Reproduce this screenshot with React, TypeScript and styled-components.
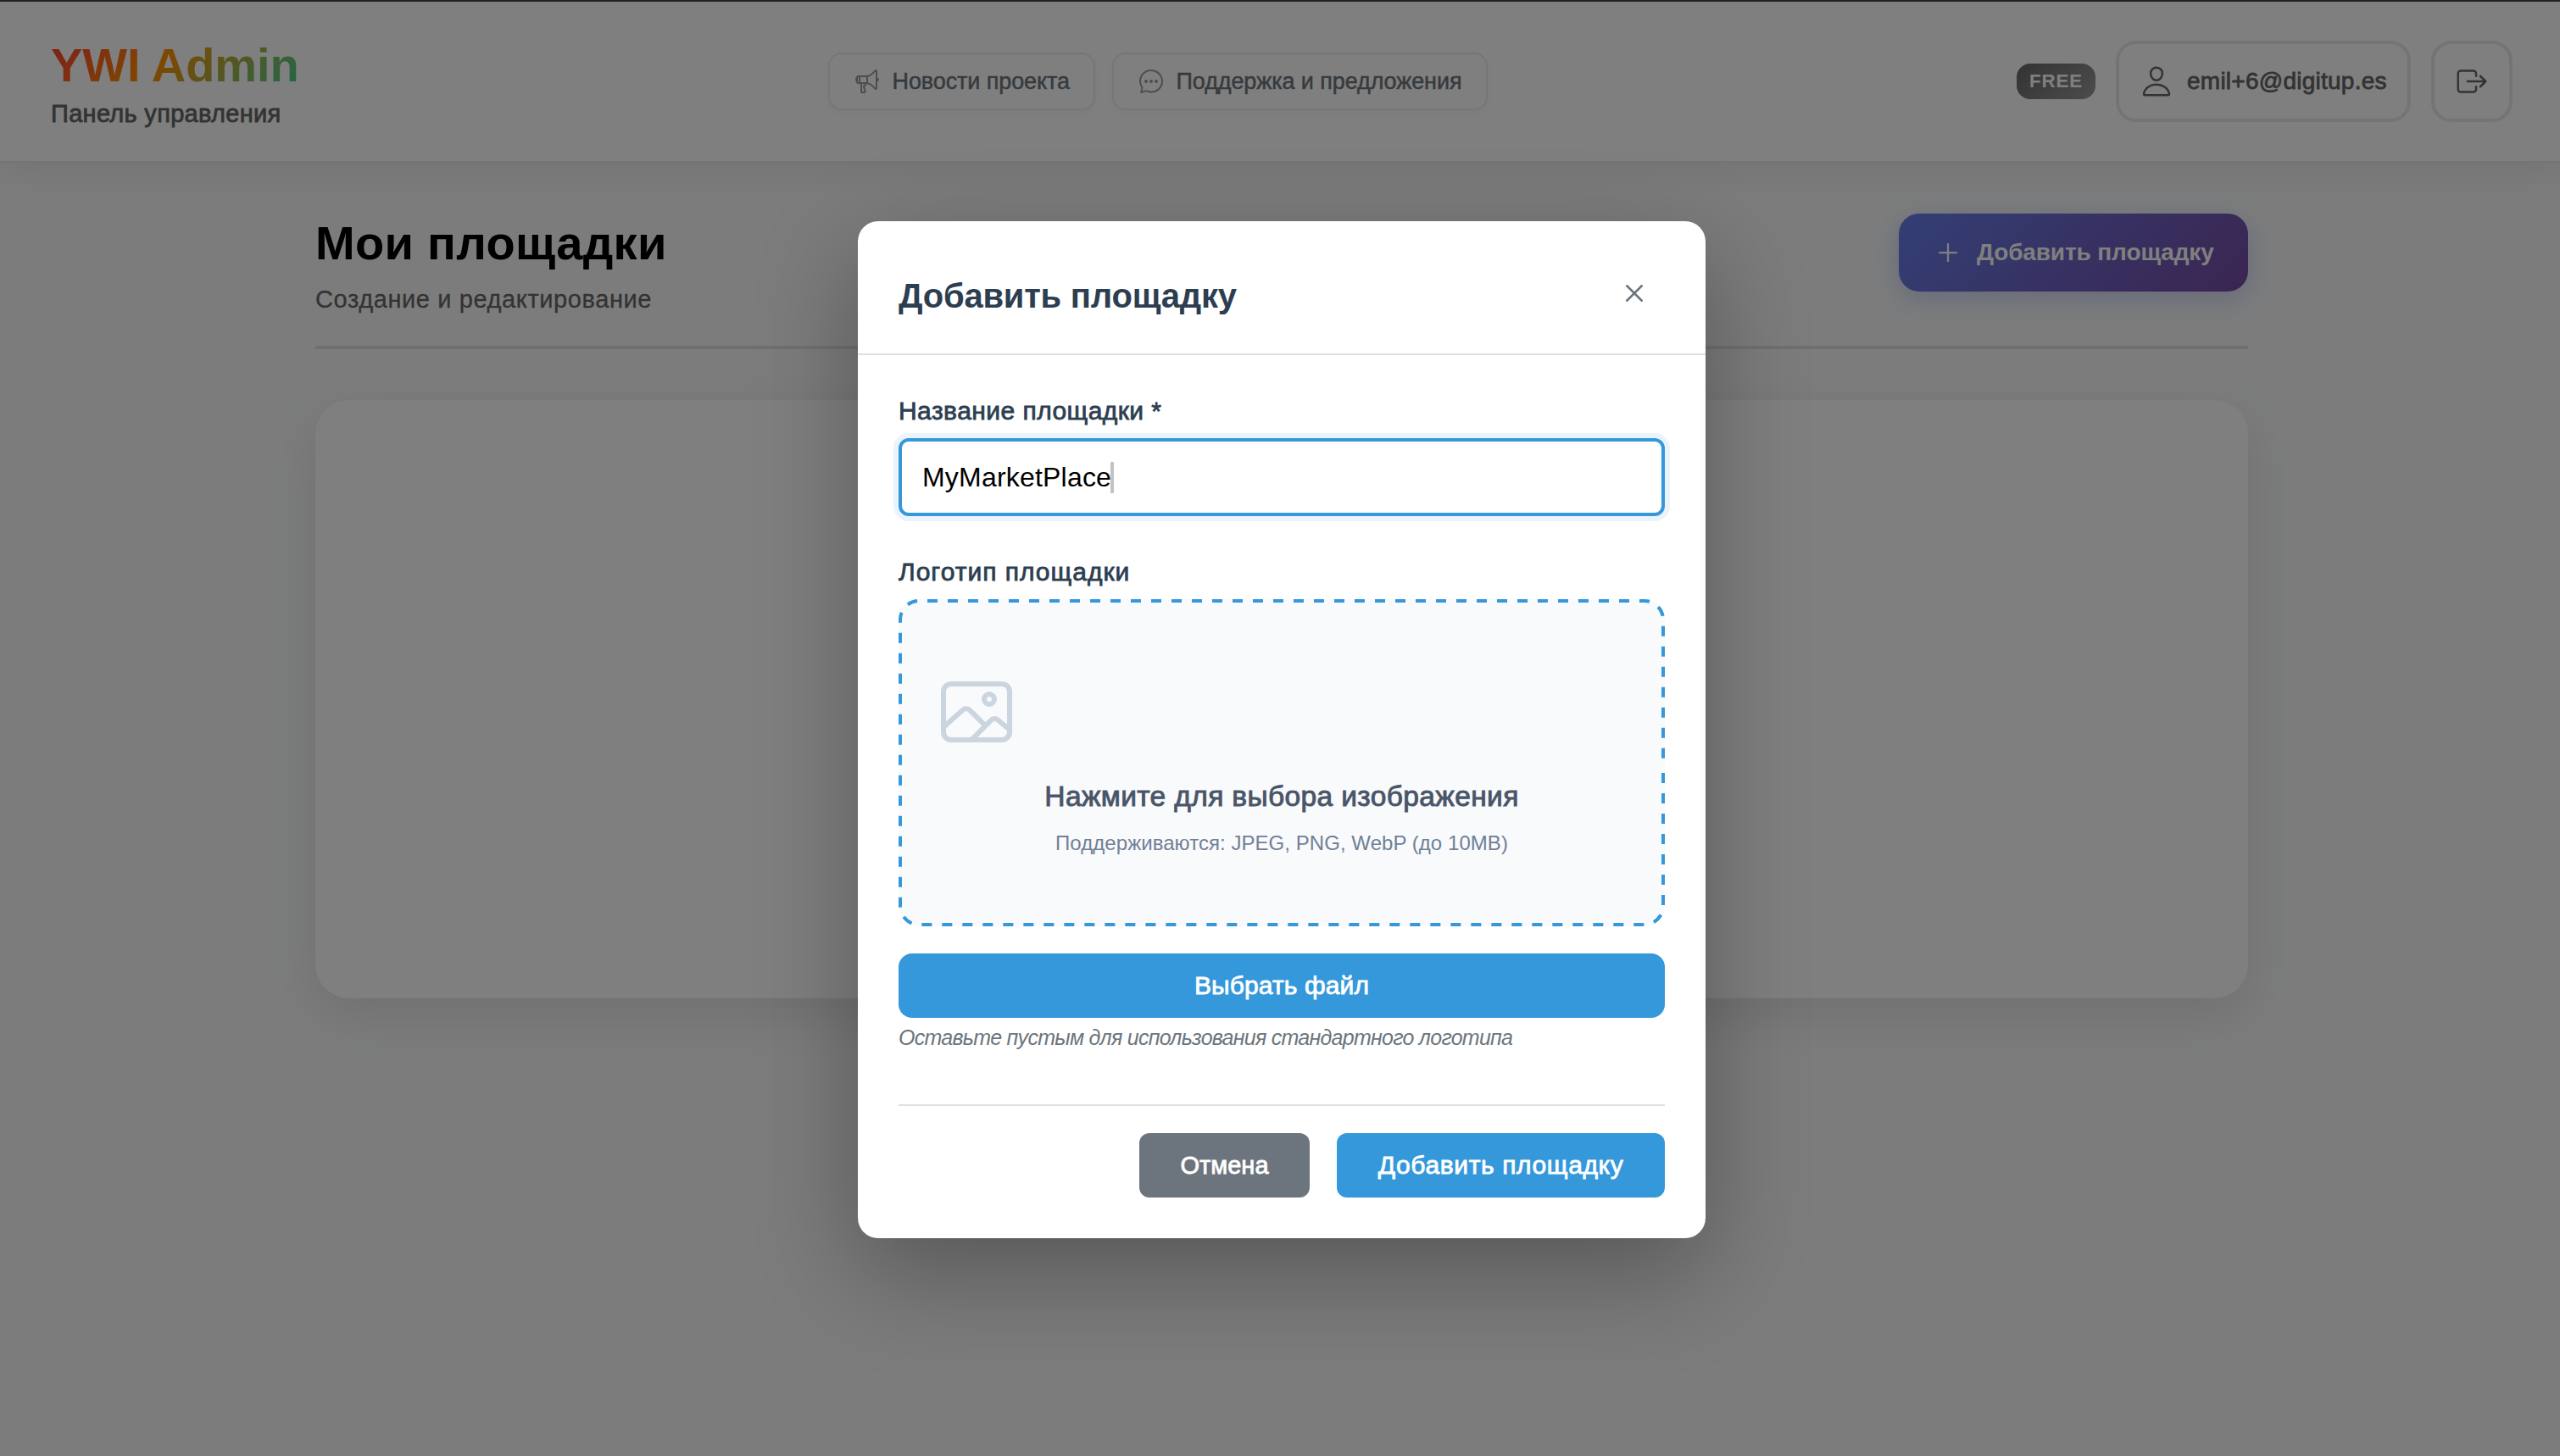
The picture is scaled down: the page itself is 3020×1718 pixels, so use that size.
import React from "react";
import styled, { createGlobalStyle } from "styled-components";
import {
  IoAddOutline,
  IoChatbubbleEllipsesOutline,
  IoCloseOutline,
  IoExitOutline,
  IoImageOutline,
  IoMegaphoneOutline,
  IoPersonOutline,
} from "react-icons/io5";

const GlobalStyle = createGlobalStyle`
  * {
    box-sizing: border-box;
  }

  body {
    margin: 0;
    overflow: hidden;
    background: #f8f9fa;
    font-family: "Liberation Sans", Arial, sans-serif;
  }

  h1, h2, p {
    margin: 0;
  }

  button {
    font-family: inherit;
    border: none;
    cursor: pointer;
  }

  svg {
    display: block;
    flex-shrink: 0;
  }
`;

// Layout
const Page = styled.div`
  position: relative;
  width: 3024px;
  height: 1718px;
  border-top: 2px solid #222222;
  background: #f8f9fa;
`;

const Header = styled.header`
  position: relative;
  display: flex;
  align-items: center;
  justify-content: space-between;
  height: 190px;
  padding: 0 60px;
  background: #ffffff;
  border-bottom: 2px solid #e8e8e8;
  box-shadow: 0 8px 40px rgba(0, 0, 0, 0.08);
`;

const Brand = styled.div`
  display: flex;
  flex-direction: column;
  gap: 14px;
  width: 292px;
`;

const BrandName = styled.div`
  font-size: 56px;
  font-weight: 700;
  line-height: 62px;
  letter-spacing: -0.1px;
  white-space: nowrap;
  background: linear-gradient(135deg, #ff3c38 0%, #ff9000 44%, #3ad29a 100%);
  background-clip: text;
  -webkit-background-clip: text;
  color: transparent;
`;

const BrandSubtitle = styled.div`
  font-size: 29px;
  line-height: 25px;
  letter-spacing: 0.3px;
  white-space: nowrap;
  color: #666666;
  -webkit-text-stroke: 0.8px #666666;
`;

const Nav = styled.nav`
  display: flex;
  gap: 20px;
`;

const NavLink = styled.a<{ $width: number }>`
  display: flex;
  align-items: center;
  gap: 14px;
  width: ${({ $width }) => $width}px;
  height: 68px;
  padding: 0 28px;
  border: 2px solid #ececec;
  border-radius: 16px;
  box-shadow: 0 4px 8px rgba(0, 0, 0, 0.04);
  background: #ffffff;
  color: #6c757d;
  font-size: 27px;
  letter-spacing: -0.1px;
  white-space: nowrap;
  -webkit-text-stroke: 0.5px #6c757d;

  svg {
    opacity: 0.7;
    -webkit-text-stroke: 0;
  }
`;

const Account = styled.div`
  display: flex;
  align-items: center;
  gap: 24px;
`;

const PlanBadge = styled.span`
  display: flex;
  align-items: center;
  justify-content: center;
  width: 93px;
  height: 42px;
  border-radius: 16px;
  background: linear-gradient(135deg, #666666, #999999);
  color: #ffffff;
  font-size: 22.4px;
  font-weight: 700;
  letter-spacing: 0.8px;
`;

const AccountBox = styled.div<{ $width: number }>`
  display: flex;
  align-items: center;
  gap: 16px;
  width: ${({ $width }) => $width}px;
  height: 96px;
  padding: 0 24px;
  border: 4px solid #e8e8e8;
  border-radius: 24px;
  background: #ffffff;
  color: #666666;
  font-size: 28px;
  letter-spacing: 0.25px;
  white-space: nowrap;
  -webkit-text-stroke: 0.8px #666666;
`;

const Main = styled.main`
  width: 2280px;
  margin: 0 auto;
  padding-top: 60px;
`;

const PageHeader = styled.div`
  display: flex;
  align-items: flex-start;
  justify-content: space-between;
  height: 160px;
  margin-bottom: 60px;
  border-bottom: 4px solid #e0e0e0;
`;

const PageTitle = styled.h1`
  font-size: 56px;
  font-weight: 700;
  line-height: 69px;
  letter-spacing: 0.32px;
  color: #000000;
`;

const PageSubtitle = styled.p`
  margin-top: 14px;
  font-size: 29px;
  line-height: 36px;
  letter-spacing: 0.6px;
  color: #666666;
  -webkit-text-stroke: 0.3px #666666;
`;

const AddButton = styled.button`
  display: flex;
  align-items: center;
  gap: 16px;
  width: 412px;
  height: 92px;
  padding: 0 40px;
  border-radius: 24px;
  background: linear-gradient(135deg, #667eea 0%, #764ba2 100%);
  box-shadow: 0 8px 30px rgba(102, 126, 234, 0.3);
  color: #ffffff;
  font-size: 28px;
  font-weight: 700;
  line-height: 34px;
  letter-spacing: -0.12px;
  white-space: nowrap;
`;

const Card = styled.section`
  height: 706px;
  border-radius: 40px;
  background: #ffffff;
  box-shadow: 0 20px 60px rgba(0, 0, 0, 0.1);
`;

// Modal
const Overlay = styled.div`
  position: absolute;
  inset: 0;
  display: flex;
  align-items: center;
  justify-content: center;
  background: rgba(0, 0, 0, 0.5);
`;

const Modal = styled.div`
  width: 1000px;
  height: 1200px;
  margin-top: 2px;
  border-radius: 24px;
  background: #ffffff;
  box-shadow: 0 40px 120px rgba(0, 0, 0, 0.3);
`;

const ModalHeader = styled.div`
  display: flex;
  align-items: flex-start;
  justify-content: space-between;
  height: 158px;
  padding: 48px 48px 0;
  border-bottom: 2px solid #e0e0e0;
`;

const ModalTitle = styled.h2`
  font-size: 40px;
  font-weight: 700;
  line-height: 81px;
  letter-spacing: -0.22px;
  color: #2c3e50;
`;

const CloseButton = styled.button`
  margin-top: 1px;
  padding: 16px;
  background: none;
  color: #6c757d;
`;

const Form = styled.form`
  padding: 48px;
`;

const Label = styled.label<{ $spacing: number }>`
  display: block;
  margin-bottom: 14px;
  font-size: 30px;
  line-height: 36px;
  letter-spacing: ${({ $spacing }) => $spacing}px;
  color: #2c3e50;
  -webkit-text-stroke: 0.8px #2c3e50;
`;

const NameField = styled.div`
  display: flex;
  align-items: center;
  height: 92px;
  margin-bottom: 48px;
  padding: 1px 24px 0;
  border: 4px solid #3498db;
  border-radius: 12px;
  box-shadow: 0 0 0 6px #ebf3fd;
  font-size: 32px;
  letter-spacing: 0.2px;
  color: #000000;
`;

const Caret = styled.span`
  width: 4px;
  height: 37px;
  margin-left: -1px;
  border-radius: 1px;
  background: #c2c2c2;
`;

const DropZone = styled.div`
  position: relative;
  height: 386px;
  margin-bottom: 32px;
  padding: 85px 44px 0;
  border-radius: 24px;
  background: #f8fafc;
  color: #cbd5e0;
  text-align: center;
`;

const DashedOutline = styled.svg`
  position: absolute;
  inset: 0;
`;

const DropTitle = styled.p`
  margin-top: 31px;
  font-size: 33.6px;
  line-height: 42px;
  letter-spacing: 0.34px;
  color: #4a5568;
  -webkit-text-stroke: 0.9px #4a5568;
`;

const DropHint = styled.p`
  margin-top: 19px;
  font-size: 24px;
  line-height: 30px;
  letter-spacing: 0.05px;
  color: #718096;
`;

const Button = styled.button<{ $variant?: "secondary"; $width?: number; $spacing?: number }>`
  width: ${({ $width }) => ($width ? `${$width}px` : "100%")};
  height: 76px;
  padding: 0;
  border-radius: ${({ $width }) => ($width ? 12 : 16)}px;
  background: ${({ $variant }) => ($variant === "secondary" ? "#6c757d" : "#3498db")};
  color: #ffffff;
  font-size: ${({ $variant }) => ($variant === "secondary" ? 29 : 30)}px;
  letter-spacing: ${({ $spacing = 0 }) => $spacing}px;
  white-space: nowrap;
  -webkit-text-stroke: 0.8px #ffffff;
`;

const FieldHint = styled.p`
  margin-top: 8px;
  font-size: 25px;
  font-style: italic;
  line-height: 30px;
  letter-spacing: -0.74px;
  white-space: nowrap;
  color: #6c757d;
`;

const ModalFooter = styled.div`
  display: flex;
  justify-content: flex-end;
  gap: 32px;
  margin-top: 64px;
  padding-top: 32px;
  border-top: 2px solid #e0e0e0;
`;

const AddPlatformModal: React.FC = () => {
  return (
    <Overlay>
      <Modal>
        <ModalHeader>
          <ModalTitle>Добавить площадку</ModalTitle>
          <CloseButton>
            <IoCloseOutline size={40} />
          </CloseButton>
        </ModalHeader>
        <Form>
          <Label $spacing={0.45}>Название площадки *</Label>
          <NameField>
            <span>MyMarketPlace</span>
            <Caret />
          </NameField>

          <Label $spacing={1}>Логотип площадки</Label>
          <DropZone>
            <DashedOutline width="904" height="386" viewBox="0 0 904 386">
              <path
                d="M902 193V362a22 22 0 0 1-22 22H24a22 22 0 0 1-22-22V24a22 22 0 0 1 22-22H880a22 22 0 0 1 22 22Z"
                fill="none"
                stroke="#3498db"
                strokeWidth="4"
                strokeDasharray="12 12"
                strokeDashoffset="12"
              />
            </DashedOutline>
            <IoImageOutline size={96} />
            <DropTitle>Нажмите для выбора изображения</DropTitle>
            <DropHint>Поддерживаются: JPEG, PNG, WebP (до 10MB)</DropHint>
          </DropZone>
          <Button type="button" $spacing={0.1}>
            Выбрать файл
          </Button>
          <FieldHint>Оставьте пустым для использования стандартного логотипа</FieldHint>

          <ModalFooter>
            <Button type="button" $variant="secondary" $width={201}>
              Отмена
            </Button>
            <Button type="button" $width={387} $spacing={0.62}>
              Добавить площадку
            </Button>
          </ModalFooter>
        </Form>
      </Modal>
    </Overlay>
  );
};

const App: React.FC = () => {
  return (
    <>
      <GlobalStyle />
      <Page>
        <Header>
          <Brand>
            <BrandName>YWI Admin</BrandName>
            <BrandSubtitle>Панель управления</BrandSubtitle>
          </Brand>
          <Nav>
            <NavLink $width={315}>
              <IoMegaphoneOutline size={32} />
              Новости проекта
            </NavLink>
            <NavLink $width={443}>
              <IoChatbubbleEllipsesOutline size={32} />
              Поддержка и предложения
            </NavLink>
          </Nav>
          <Account>
            <PlanBadge>FREE</PlanBadge>
            <AccountBox $width={348}>
              <IoPersonOutline size={40} />
              emil+6@digitup.es
            </AccountBox>
            <AccountBox $width={96}>
              <IoExitOutline size={40} />
            </AccountBox>
          </Account>
        </Header>

        <Main>
          <PageHeader>
            <div>
              <PageTitle>Мои площадки</PageTitle>
              <PageSubtitle>Создание и редактирование</PageSubtitle>
            </div>
            <AddButton>
              <IoAddOutline size={36} />
              Добавить площадку
            </AddButton>
          </PageHeader>
          <Card />
        </Main>

        <AddPlatformModal />
      </Page>
    </>
  );
};

export default App;
